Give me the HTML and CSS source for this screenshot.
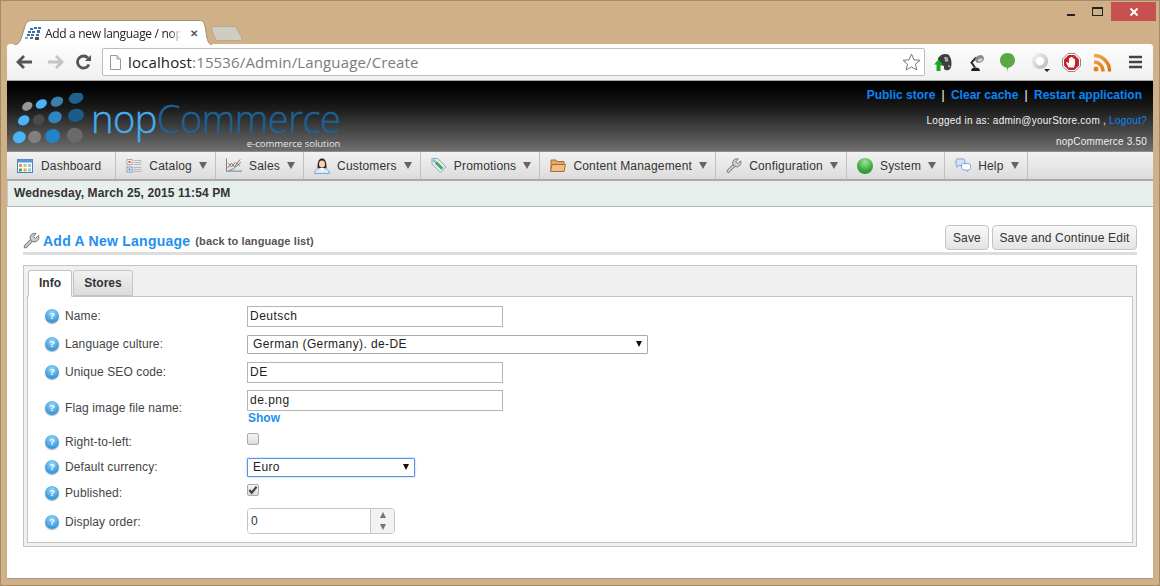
FILE: index.html
```html
<!DOCTYPE html>
<html lang="en">
<head>
<meta charset="utf-8">
<title>Add a new language / nopCommerce administration</title>
<link rel="stylesheet" href="styles.css">
</head>
<body>
<div class="window">
  <div class="strip">
    <div class="tab">
      <svg class="tab-shape" width="198" height="25" viewBox="0 0 198 25"><path d="M0 24.500C5 24.500 6 22 8 16L11 6C12 2.500 14 .5 18 .5H185C189 .5 190 2.500 191 6L193 18C194 22 195 24.500 198 24.500" fill="#fff" stroke="#9c8f78"/></svg>
      <svg class="favicon" width="16" height="13" viewBox="0 0 16 13"><g fill="#3b6fa8"><rect x="5" y="1" width="3" height="2"/><rect x="9" y="0" width="3" height="2"/><rect x="13" y="0" width="3" height="2"/><rect x="3" y="4" width="3" height="2"/><rect x="7" y="4" width="3" height="2"/><rect x="12" y="3" width="3" height="3"/><rect x="2" y="7" width="3" height="2"/><rect x="6" y="7" width="3" height="2"/><rect x="11" y="7" width="3" height="2"/><rect x="0" y="10" width="3" height="2" fill="#7aa8d0"/><rect x="5" y="10" width="3" height="2"/><rect x="10" y="10" width="4" height="3" fill="#555"/></g></svg>
      <span class="tab-title">Add a new language / nop</span>
      <span class="tab-close">✕</span>
    </div>
    <svg class="newtab" width="32" height="15" viewBox="0 0 32 15"><path d="M.5 3C.5 1.500 1.500 .5 3 .5H23C24.500 .5 25.500 1.500 26 3L31 12C31.500 14 30 14.500 29 14.500H7C5.500 14.500 5 14 4.500 13Z" fill="#cfcdc3" stroke="#b4a98f"/></svg>
    <div class="controls">
      <span class="ctl ctl-min"><svg width="8" height="3"><rect width="8" height="2" y="1" fill="#222"/></svg></span>
      <span class="ctl"><svg width="11" height="9"><rect x=".5" y=".5" width="10" height="8" fill="none" stroke="#222"/><rect width="11" height="2" fill="#222"/></svg></span>
      <span class="ctl close"><svg width="10" height="10" viewBox="0 0 10 10"><path d="M1.500 1.500L8.500 8.500M8.500 1.500L1.500 8.500" stroke="#fff" stroke-width="2"/></svg></span>
    </div>
  </div>

  <div class="toolbar">
    <svg class="nav" width="18" height="16" viewBox="0 0 18 16"><path d="M8 2L2 8L8 14M2.500 8H16" fill="none" stroke="#555" stroke-width="2.800"/></svg>
    <svg class="nav" width="18" height="16" viewBox="0 0 18 16"><path d="M10 2L16 8L10 14M15.500 8H2" fill="none" stroke="#c4c4c4" stroke-width="2.800"/></svg>
    <svg class="nav reload" width="18" height="16" viewBox="0 0 18 16"><path d="M14 10.500A6 6 0 1 1 13 4" fill="none" stroke="#555" stroke-width="2.800"/><path d="M10 7H16V1Z" fill="#555"/></svg>
    <div class="omnibox">
      <svg width="11" height="15" viewBox="0 0 11 15"><path d="M.5 .5H7L10.500 4V14.500H.5Z" fill="#fbfbfb" stroke="#999"/><path d="M7 .5V4H10.500" fill="#ddd" stroke="#999"/></svg>
      <span class="url"><span class="host">localhost</span>:15536/Admin/Language/Create</span>
      <svg class="star" width="19" height="18" viewBox="0 0 19 18"><path d="M9.500 1L12 6.800L18 7.300L13.400 11.200L14.900 17L9.500 14L4.100 17L5.600 11.200L1 7.300L7 6.800Z" fill="#fff" stroke="#777"/></svg>
    </div>
    <div class="extensions">
      <svg width="18" height="19" viewBox="0 0 18 19"><path d="M4 5L7 2C10 .5 13 .5 15 2L17 6C18 11 17.500 14 16 16C14 18 11.500 17.500 10 16V13L6 12C4.500 9.500 4 7 4 5Z" fill="#39403e"/><path d="M10 4H13.500L14.500 8L11.500 9Z" fill="#a8adab"/><path d="M14 12L16 13L15 14.500Z" fill="#ddd"/><path d="M0 11.500L4.500 6.500L9 11.500H6.500V18H2.500V11.500Z" fill="#18a81f"/></svg>
      <svg width="15" height="17" viewBox="0 0 15 17"><path d="M2 17C2 14.500 4 13.500 6.500 13.500S11 14.500 11 17Z" fill="#1e1e1e"/><path d="M6 13.500L2.500 8.500L7 3.500" fill="none" stroke="#2c2c2c" stroke-width="2"/><ellipse cx="10.500" cy="5" rx="4.500" ry="3.500" transform="rotate(-25 10.500 5)" fill="#8a8a8a"/><ellipse cx="11" cy="6" rx="2.500" ry="1.500" transform="rotate(-25 11 6)" fill="#d8d8d8"/></svg>
      <svg width="15" height="19" viewBox="0 0 15 19"><path d="M7.500 0C12 0 15 3 15 7.500C15 11 12 14 8 15L7.500 19L7 15C3 14 0 11 0 7.500C0 3 3 0 7.500 0Z" fill="#5aa845"/></svg>
      <svg width="19" height="19" viewBox="0 0 19 19"><defs><linearGradient id="ring" x1="0" y1="0" x2="1" y2="1"><stop offset="0" stop-color="#f0f0f0"/><stop offset="1" stop-color="#bcbcbc"/></linearGradient></defs><circle cx="9" cy="8" r="6.200" fill="#fff" stroke="url(#ring)" stroke-width="4"/><path d="M13 16H19L16 19Z" fill="#222"/></svg>
      <svg width="19" height="19" viewBox="0 0 19 19"><path d="M6 .5H13L18.500 6V13L13 18.500H6L.5 13V6Z" fill="#fff" stroke="#8a8a8a"/><path d="M6.600 2H12.400L17 6.600V12.400L12.400 17H6.600L2 12.400V6.600Z" fill="#cb1f26"/><path d="M6.500 14.500L4 9.500L5.500 9L7 10.500V5H8.500V4H10V4.500H11.500V6H13V11L12 14.500Z" fill="#fff"/></svg>
      <svg width="19" height="19" viewBox="0 0 19 19"><defs><linearGradient id="rss" x1="0" y1="0" x2="1" y2="1"><stop offset="0" stop-color="#f5a64a"/><stop offset="1" stop-color="#d8730f"/></linearGradient></defs><circle cx="3" cy="16" r="2.500" fill="#e8821c"/><path d="M1 9A9 9 0 0 1 10 18.500M1 2.500A15.500 15.500 0 0 1 16.500 18.500" fill="none" stroke="url(#rss)" stroke-width="3.400"/></svg>
      <svg width="13" height="14" viewBox="0 0 13 14"><path d="M0 2H13M0 7H13M0 12H13" stroke="#444" stroke-width="2.600"/></svg>
    </div>
  </div>

  <div class="page">
    <header class="head">
      <div class="brand">
        <svg class="logo-mark" width="74" height="54" viewBox="12 93 74 54">
          <ellipse cx="27.300" cy="106.300" rx="5.500" ry="4" transform="rotate(-30 27.300 106.300)" fill="#969696"/>
          <ellipse cx="41.300" cy="104" rx="6" ry="4.300" transform="rotate(-30 41.300 104)" fill="#4ab4f8"/>
          <ellipse cx="57" cy="101.700" rx="6.500" ry="4.800" transform="rotate(-25 57 101.700)" fill="#3a7fae"/>
          <ellipse cx="76" cy="98" rx="7.500" ry="5.500" transform="rotate(-20 76 98)" fill="#20608f"/>
          <ellipse cx="23.700" cy="120.300" rx="6" ry="4.800" transform="rotate(-30 23.700 120.300)" fill="#4ab4f8"/>
          <ellipse cx="38.700" cy="119.700" rx="6" ry="5.200" transform="rotate(-25 38.700 119.700)" fill="#4a4a4a"/>
          <ellipse cx="55" cy="117.300" rx="7" ry="5.800" transform="rotate(-25 55 117.300)" fill="#2f86c0"/>
          <ellipse cx="76" cy="115.300" rx="8" ry="6.500" transform="rotate(-15 76 115.300)" fill="#1a5d8a"/>
          <ellipse cx="19.300" cy="137.300" rx="6.500" ry="5.800" transform="rotate(-30 19.300 137.300)" fill="#4ab4f8"/>
          <ellipse cx="34.700" cy="137" rx="6.500" ry="6.200" transform="rotate(-20 34.700 137)" fill="#808080"/>
          <ellipse cx="52.700" cy="136" rx="7.500" ry="7" transform="rotate(-20 52.700 136)" fill="#1f84c8"/>
          <ellipse cx="74.700" cy="135.300" rx="8" ry="7.500" fill="#6a6a6a"/>
        </svg>
        <div class="wordmark">
          <div class="wordname"><span class="nop">nop</span><span class="commerce">Commerce</span></div>
          <div class="tagline">e-commerce solution</div>
        </div>
      </div>
      <div class="head-right">
        <div class="head-links"><a>Public store</a><span class="pipe">|</span><a>Clear cache</a><span class="pipe">|</span><a>Restart application</a></div>
        <div class="head-user">Logged in as: admin@yourStore.com , <a>Logout?</a></div>
        <div class="head-ver">nopCommerce 3.50</div>
      </div>
    </header>

    <nav class="menu">
      <div class="item first">
        <svg width="16" height="14" viewBox="0 0 16 14"><rect x=".5" y=".5" width="15" height="13" fill="#fff" stroke="#4a82b8"/><rect x=".5" y=".5" width="15" height="3" fill="#5c94cc"/><rect x="2" y="5" width="3" height="3" fill="#d94"/><rect x="6.500" y="5" width="3" height="3" fill="#9cc"/><rect x="11" y="5" width="3" height="3" fill="#9cc"/><rect x="2" y="9.500" width="3" height="3" fill="#4a7"/><rect x="6.500" y="9.500" width="3" height="3" fill="#da4"/><rect x="11" y="9.500" width="3" height="3" fill="#9cc"/></svg>
        <span>Dashboard</span>
      </div>
      <div class="item">
        <svg width="15" height="14" viewBox="0 0 15 14"><rect x=".5" y=".5" width="5" height="5" fill="#fff" stroke="#c99"/><rect x=".5" y="8" width="5" height="5" fill="#fff" stroke="#79b"/><rect x="2" y="2" width="2" height="2" fill="#d44"/><rect x="2" y="9.500" width="2" height="2" fill="#38c"/><path d="M7 1.500H15M7 3.500H15M7 5.500H15M7 8.500H15M7 10.500H15M7 12.500H15" stroke="#b4bac4"/></svg>
        <span>Catalog</span><i class="arrow"></i>
      </div>
      <div class="item">
        <svg width="17" height="15" viewBox="0 0 17 15"><path d="M.5 0V13.500H17" fill="none" stroke="#777"/><path d="M2 10L6 5L9 9L15 1" fill="none" stroke="#d44"/><path d="M2 5L6 9L10 4L15 8" fill="none" stroke="#4a4"/><path d="M3 13L8 11L16 4" fill="none" stroke="#48c"/></svg>
        <span>Sales</span><i class="arrow"></i>
      </div>
      <div class="item">
        <svg width="16" height="16" viewBox="0 0 16 16"><path d="M.5 15.500C1 11 4 10 8 10S15 11 15.500 15.500Z" fill="#dbe8f7" stroke="#7fa6d0"/><path d="M3.500 10C3.500 3 5 .5 8 .5S12.500 3 12.500 10Z" fill="#3a2418"/><ellipse cx="8" cy="6" rx="3" ry="3.500" fill="#f6d3b3"/><path d="M6 10H10L8 14Z" fill="#fff"/></svg>
        <span>Customers</span><i class="arrow"></i>
      </div>
      <div class="item">
        <svg width="17" height="17" viewBox="0 0 17 17"><path d="M1 1H7L16 10L10 16L1 7Z" fill="#dfeef7" stroke="#7ba9c8"/><path d="M5 5L12 12" stroke="#4aa84a" stroke-width="3"/><circle cx="3.500" cy="3.500" r="1" fill="#fff" stroke="#789"/></svg>
        <span>Promotions</span><i class="arrow"></i>
      </div>
      <div class="item">
        <svg width="16" height="15" viewBox="0 0 16 15"><path d="M1 13V2H6L7 3.500H14V13Z" fill="#e2a86c" stroke="#a86d36"/><path d="M.5 13.500L2 6.500H15.500L14 13.500Z" fill="#efbd85" stroke="#a86d36"/></svg>
        <span>Content Management</span><i class="arrow"></i>
      </div>
      <div class="item">
        <svg width="17" height="17" viewBox="0 0 17 17"><path d="M2.500 14.500L9 8" stroke="#777" stroke-width="3.600" stroke-linecap="round"/><path d="M2.500 14.500L9 8" stroke="#ddd" stroke-width="1.600" stroke-linecap="round"/><path d="M8 8.500A4.500 4.500 0 0 1 13 1.500L10.500 4.500L12.500 6.500L15.500 3.500A4.500 4.500 0 0 1 9.500 9.500Z" fill="#ccc" stroke="#777"/></svg>
        <span>Configuration</span><i class="arrow"></i>
      </div>
      <div class="item">
        <span class="status-dot"></span>
        <span>System</span><i class="arrow"></i>
      </div>
      <div class="item">
        <svg width="17" height="15" viewBox="0 0 17 15"><path d="M1 2.500C1 1 2 .5 3 .5H8C10 .5 10.500 1.500 10.500 3V5C10.500 7 9.500 7.500 8 7.500H4L2 9.500V7.500C1.500 7 1 6.500 1 5Z" fill="#cfe3fa" stroke="#6f9fd6"/><path d="M7 7C7 6 8 5.500 9 5.500H14C15.500 5.500 16.500 6.500 16.500 8V10C16.500 11.500 15.500 12 14 12H13.500V14L11.500 12H9C8 12 7 11 7 10Z" fill="#fff" stroke="#6f9fd6"/></svg>
        <span>Help</span><i class="arrow"></i>
      </div>
    </nav>

    <div class="datebar">Wednesday, March 25, 2015 11:54 PM</div>

    <main class="content">
      <div class="title-row">
        <div class="title">
          <svg width="17" height="17" viewBox="0 0 17 17"><path d="M2.500 14.500L9 8" stroke="#777" stroke-width="3.600" stroke-linecap="round"/><path d="M2.500 14.500L9 8" stroke="#ddd" stroke-width="1.600" stroke-linecap="round"/><path d="M8 8.500A4.500 4.500 0 0 1 13 1.500L10.500 4.500L12.500 6.500L15.500 3.500A4.500 4.500 0 0 1 9.500 9.500Z" fill="#ccc" stroke="#777"/></svg>
          <h1>Add A New Language</h1>
          <a class="back">(back to language list)</a>
        </div>
        <div class="actions">
          <button class="btn" type="button">Save</button>
          <button class="btn" type="button">Save and Continue Edit</button>
        </div>
      </div>

      <section class="tabs">
        <div class="tabbar">
          <div class="ftab active">Info</div>
          <div class="ftab">Stores</div>
        </div>
        <div class="panel">
          <div class="row r-28">
            <label class="lbl"><i class="help">?</i>Name:</label>
            <input class="text" type="text" value="Deutsch">
          </div>
          <div class="row r-28">
            <label class="lbl"><i class="help">?</i>Language culture:</label>
            <div class="sel wide"><select><option>German (Germany). de-DE</option></select></div>
          </div>
          <div class="row r-28">
            <label class="lbl"><i class="help">?</i>Unique SEO code:</label>
            <input class="text" type="text" value="DE">
          </div>
          <div class="row r-44">
            <label class="lbl"><i class="help">?</i>Flag image file name:</label>
            <div class="stack">
              <input class="text" type="text" value="de.png">
              <a class="show">Show</a>
            </div>
          </div>
          <div class="row r-24">
            <label class="lbl"><i class="help">?</i>Right-to-left:</label>
            <span class="check"></span>
          </div>
          <div class="row r-26">
            <label class="lbl"><i class="help">?</i>Default currency:</label>
            <div class="sel narrow focus"><select><option>Euro</option></select></div>
          </div>
          <div class="row r-26">
            <label class="lbl"><i class="help">?</i>Published:</label>
            <span class="check"><svg width="11" height="10" viewBox="0 0 11 10"><path d="M1.500 5L4 8L9.500 1.500" fill="none" stroke="#444" stroke-width="2.400"/></svg></span>
          </div>
          <div class="row r-32">
            <label class="lbl"><i class="help">?</i>Display order:</label>
            <div class="spin">
              <input type="text" value="0">
              <div class="spin-btns"><i class="up"></i><i class="down"></i></div>
            </div>
          </div>
        </div>
      </section>
    </main>
  </div>
</div>
</body>
</html>
```
FILE: styles.css
```css
* { box-sizing: border-box; }
html, body { margin: 0; height: 586px; overflow: hidden; }
body { font-family: "Liberation Sans", Arial, sans-serif; font-size: 12px; color: #333; }
a { cursor: pointer; }

.window {
  width: 1160px; height: 586px;
  background: #cfb087;
  border: 1px solid #a58a66;
  padding: 0 6px 6px 6px;
  display: flex; flex-direction: column;
}

.strip { height: 43px; display: flex; align-items: flex-end; padding-left: 7px; position: relative; flex: none; }
.tab { width: 198px; height: 25px; position: relative; display: flex; align-items: center; padding: 2px 0 0 11px; margin-bottom: -1px; z-index: 1; }
.tab-shape { position: absolute; left: 0; top: 0; }
.favicon { position: relative; flex: none; margin-right: 4px; }
.tab-title { position: relative; font-family: "Open Sans", sans-serif; font-size: 12px; letter-spacing: -.32px; color: #222; white-space: nowrap; width: 136px; flex: none; -webkit-mask-image: linear-gradient(90deg, #000 92%, transparent); mask-image: linear-gradient(90deg, #000 92%, transparent); }
.tab-close { position: relative; font-size: 10px; color: #555; margin-left: 9px; font-weight: bold; }
.newtab { margin: 0 0 3px -1px; }
.controls { position: absolute; right: -3px; top: 1px; display: flex; align-items: flex-start; }
.ctl { width: 27px; height: 19px; display: flex; align-items: center; justify-content: center; }
.ctl-min { padding-top: 5px; }
.ctl.close { width: 45px; background: #c75050; }

.toolbar {
  height: 37px; flex: none;
  display: flex; align-items: center;
  background: linear-gradient(#fdfdfd, #f0f0f0);
  border-radius: 3px 3px 0 0;
  padding-left: 9px;
  border-bottom: 1px solid #a9a9a9;
}
.nav { margin-right: 12px; flex: none; }
.nav.reload { margin-right: 9px; margin-left: -1px; }
.omnibox {
  width: 823px; height: 28px;
  display: flex; align-items: center; gap: 7px;
  background: #fff; border: 1px solid #bdbdbd; border-radius: 2px;
  padding: 0 3px 0 7px;
  flex: none;
}
.url { font-family: "Open Sans", sans-serif; font-size: 15px; letter-spacing: .14px; color: #7c7c7c; flex: 1; white-space: nowrap; }
.host { color: #222; }
.star { flex: none; }
.extensions { display: grid; grid-template-columns: 35px 31px 31px 31px 31px 36px 13px; align-items: center; padding-left: 9px; flex: 1; }

.page { flex: 1; background: #fff; display: flex; flex-direction: column; min-height: 0; border-bottom: 1px solid #9a9a9a; }

.head {
  height: 70px; flex: none; display: flex; justify-content: space-between;
  background: linear-gradient(#000 8%, #1c1c1c 40%, #6e6e6e 100%);
}
.brand { display: flex; align-items: flex-start; padding: 12px 0 0 5px; }
.logo-mark { flex: none; }
.wordmark { margin-left: 5px; position: relative; }
.wordname { font-family: "Open Sans", sans-serif; font-weight: 300; font-size: 38px; line-height: 36px; height: 36px; margin-top: 7px; letter-spacing: -.5px; white-space: nowrap; -webkit-text-stroke: .4px; }
.nop { color: #44aef0; }
.commerce { color: #1d6294; }
.tagline { position: absolute; right: 0; top: 44px; line-height: 13px; font-family: "Open Sans", sans-serif; font-size: 9.500px; color: #e8e8e8; white-space: nowrap; }
.head-right { display: flex; flex-direction: column; align-items: flex-end; padding-right: 6px; }
.head-links { font-size: 12px; font-weight: bold; color: #0b84f5; margin-top: 6px; margin-right: 5px; line-height: 16px; }
.pipe { color: #fff; margin: 0 6.250px; font-weight: normal; }
.head-user { font-size: 10px; color: #f4f4f4; margin-top: 11px; line-height: 14px; letter-spacing: .25px; }
.head-user a { color: #0b84f5; }
.head-ver { font-size: 10px; color: #f0f0f0; margin-top: 7px; line-height: 14px; letter-spacing: .2px; }

.menu { height: 30px; flex: none; display: flex; background: linear-gradient(#f2f2f2, #dcdcdc); border-top: 1px solid #8d8d8d; border-bottom: 2px solid #aaa; }
.item { display: flex; align-items: center; gap: 7px; padding: 0 8.100px 0 10px; border-right: 1px solid #c2c2c2; font-size: 12px; letter-spacing: .18px; color: #333; white-space: nowrap; }
.item svg, .status-dot { width: 16px; flex: none; }
.item.first { padding: 0 14px 0 10px; gap: 8px; }
.arrow { width: 0; height: 0; border-left: 4px solid transparent; border-right: 4px solid transparent; border-top: 7px solid #6a625c; }
.status-dot { height: 16px; border-radius: 50%; background: radial-gradient(circle at 50% 25%, #9be29b, #3aa63a 60%, #1f7f2a); }

.datebar { height: 26px; flex: none; line-height: 24px; padding-left: 6px; background: #e7efed; border-bottom: 1px solid #b4b4b4; border-left: 1px solid #c9c9c9; font-size: 12px; font-weight: bold; color: #333; letter-spacing: .12px; }

.content { padding: 18px 16px 0 16px; flex: 1; }
.title-row { display: flex; justify-content: space-between; align-items: flex-start; height: 30px; border-bottom: 3px solid #ddd; }
.title { display: flex; align-items: center; gap: 3px; height: 25px; padding-top: 6px; }
.title h1 { margin: 0; font-size: 14px; font-weight: bold; color: #1e90f0; letter-spacing: .25px; }
.back { font-size: 11px; font-weight: bold; color: #555; margin-left: 2px; letter-spacing: .1px; }
.actions { display: flex; gap: 3px; }
.btn { height: 25px; min-width: 44px; padding: 0 6.500px; background: linear-gradient(#f8f8f8, #e4e4e4); border: 1px solid #c4c4c4; border-radius: 4px; font: 12px "Liberation Sans", Arial, sans-serif; letter-spacing: .18px; color: #333; }

.tabs { margin-top: 10px; height: 282px; border: 1px solid #c4c4c4; background: #f0f0f0; padding: 4px 3px 3px; display: flex; flex-direction: column; }
.tabbar { display: flex; gap: 1px; padding-left: 1px; height: 26px; flex: none; position: relative; z-index: 1; }
.ftab { width: 60px; height: 26px; line-height: 25px; text-align: center; font-weight: bold; color: #333; background: linear-gradient(#f0f0f0, #dcdcdc); border: 1px solid #c4c4c4; border-radius: 3px 3px 0 0; }
.ftab.active { width: 44px; background: #fff; border-bottom-color: #fff; height: 27px; }
.panel { flex: 1; background: #fff; border: 1px solid #c4c4c4; padding: 5px 0 0 17px; }

.row { display: grid; grid-template-columns: 202px auto; align-items: center; justify-content: start; }
.r-24 { height: 24px; }
.r-26 { height: 26px; }
.r-28 { height: 28px; }
.r-32 { height: 32px; }
.r-44 { height: 44px; }
.lbl { display: flex; align-items: center; gap: 6px; color: #444; letter-spacing: .12px; }
.help { width: 14px; height: 14px; border-radius: 50%; background: radial-gradient(circle at 50% 30%, #9ad6f7, #2f95dc 75%); box-shadow: 0 1px 1px #aaa; color: #fff; font: bold 9px/14px "Liberation Sans", sans-serif; text-align: center; flex: none; }
.text { width: 256px; height: 21px; border: 1px solid #b5b5b5; padding: 0 2px; font: 12px "Liberation Sans", Arial, sans-serif; letter-spacing: .5px; color: #222; display: block; }
.stack { display: flex; flex-direction: column; margin-top: -2px; }
.show { color: #1e90f0; font-weight: bold; line-height: 14px; margin: 0 0 0 1px; }

.sel { position: relative; height: 19px; }
.sel::after { content: ""; position: absolute; right: 6px; top: 6px; border-left: 3.500px solid transparent; border-right: 3.500px solid transparent; border-top: 6px solid #111; pointer-events: none; }
.sel select { appearance: none; -webkit-appearance: none; width: 100%; height: 100%; background: #fff; border: 1px solid #a9a9a9; border-radius: 1px; padding: 0 5px; font: 12px "Liberation Sans", Arial, sans-serif; letter-spacing: .4px; color: #222; outline: none; }
.sel.wide { width: 401px; }
.sel.narrow { width: 168px; }
.sel.focus select { border-color: #5a94e0; box-shadow: 0 0 2px #7eb0ef; }

.check { width: 12px; height: 12px; margin-top: -6px; border: 1px solid #aaa; border-radius: 2px; background: linear-gradient(#f4f4f4, #dcdcdc); display: flex; align-items: center; justify-content: center; }

.spin { width: 148px; height: 26px; margin-top: -2px; display: flex; border: 1px solid #c4c4c4; border-radius: 4px; overflow: hidden; }
.spin input { flex: 1; min-width: 0; border: 0; outline: none; padding: 0 3px; font: 12px "Liberation Sans", Arial, sans-serif; color: #333; }
.spin-btns { width: 24px; flex: none; background: #f2f2f2; border-left: 1px solid #c4c4c4; display: flex; flex-direction: column; align-items: center; justify-content: center; gap: 6px; }
.spin-btns i { width: 0; height: 0; border-left: 3.500px solid transparent; border-right: 3.500px solid transparent; }
.up { border-bottom: 6px solid #7a726c; }
.down { border-top: 6px solid #7a726c; }
```
